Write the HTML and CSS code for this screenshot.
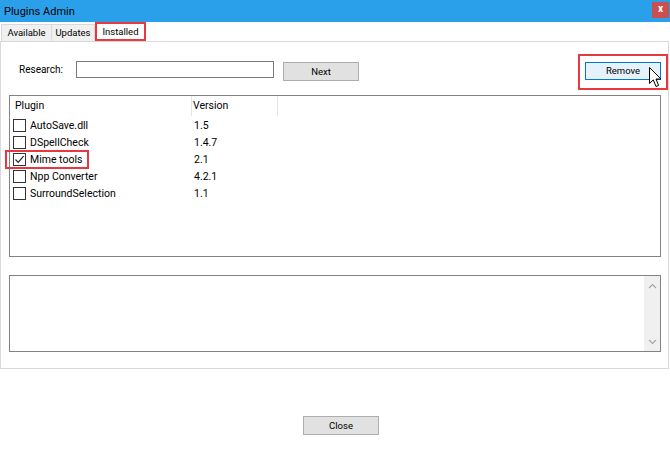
FILE: index.html
```html
<!DOCTYPE html>
<html>
<head>
<meta charset="utf-8">
<link rel="stylesheet" href="styles.css">
</head>
<body>
<div class="window">
  <div class="titlebar">
    <span class="title">Plugins Admin</span>
    <div class="close-x">x</div>
  </div>
  <div class="tabs">
    <div class="tab tab-available">Available</div>
    <div class="tab tab-updates">Updates</div>
    <div class="tab tab-active">Installed</div>
  </div>
  <div class="panel">
    <div class="search-row">
      <label class="search-label">Research:</label>
      <div class="search-input"></div>
      <div class="btn btn-next">Next</div>
      <div class="btn btn-remove">Remove</div>
      <div class="hl hl-remove"></div>
      <svg class="cursor" width="13" height="21" viewBox="0 0 13 21">
        <path d="M0.5 0.5 L0.5 16.5 L4.3 12.9 L7 19.5 L9.6 18.4 L7 12 L12 12 Z" fill="#fff" stroke="#000" stroke-width="1" stroke-linejoin="miter"/>
      </svg>
    </div>
    <div class="list">
      <div class="list-head">
        <div class="col col-name">Plugin</div>
        <div class="col col-ver">Version</div>
      </div>
      <div class="row"><span class="cb"></span><span class="name">AutoSave.dll</span><span class="ver">1.5</span></div>
      <div class="row"><span class="cb"></span><span class="name">DSpellCheck</span><span class="ver">1.4.7</span></div>
      <div class="row row-mark"><span class="cb"><svg width="11" height="11" viewBox="0 0 11 11"><path d="M1.5 5.5 L4.2 8.3 L9.6 2.2" fill="none" stroke="#222" stroke-width="1.2"/></svg></span><span class="name">Mime tools</span><span class="ver">2.1</span><div class="hl hl-mime"></div></div>
      <div class="row"><span class="cb"></span><span class="name">Npp Converter</span><span class="ver">4.2.1</span></div>
      <div class="row"><span class="cb"></span><span class="name">SurroundSelection</span><span class="ver">1.1</span></div>
    </div>
    <div class="desc">
      <div class="desc-text"></div>
      <div class="scrollbar">
        <svg width="9" height="6" viewBox="0 0 9 6"><path d="M1 5 L4.5 1.5 L8 5" fill="none" stroke="#a6a6a6" stroke-width="1.2"/></svg>
        <svg width="9" height="6" viewBox="0 0 9 6"><path d="M1 1 L4.5 4.5 L8 1" fill="none" stroke="#a6a6a6" stroke-width="1.2"/></svg>
      </div>
    </div>
  </div>
  <div class="footer">
    <div class="btn btn-close">Close</div>
  </div>
</div>
</body>
</html>
```

FILE: styles.css
```css
* { box-sizing: border-box; }
html, body {
  margin: 0;
  padding: 0;
  background: #fff;
}
body {
  font-family: Roboto, "Noto Sans", sans-serif;
  font-size: 10.5px;
  color: #000;
}
.window {
  width: 670px;
  height: 459px;
  background: #fff;
}
.titlebar {
  height: 22px;
  background: #2aa0ea;
  display: flex;
  align-items: center;
  justify-content: space-between;
  padding-left: 4px;
  padding-right: 1px;
}
.title {
  font-size: 11px;
  color: #000;
}
.close-x {
  width: 17px;
  height: 16px;
  margin-top: -3px;
  background: #c9504f;
  color: #fff;
  font-size: 10px;
  font-weight: bold;
  line-height: 14px;
  text-align: center;
}
.tabs {
  height: 19px;
  display: flex;
  align-items: flex-end;
  padding-left: 1px;
  font-size: 9.5px;
}
.tab {
  height: 17px;
  background: #f0f0f0;
  border: 1px solid #d9d9d9;
  border-bottom: none;
  line-height: 16px;
  text-align: center;
}
.tab-available { width: 50px; border-right: none; }
.tab-updates { width: 44px; }
.tab-active {
  width: 51px;
  height: 19px;
  background: #fff;
  border: 2px solid #e8373f;
  line-height: 15px;
}
.panel {
  width: 669px;
  height: 328px;
  border: 1px solid #d9d9d9;
  padding: 19px 7px 0 8px;
  position: relative;
}
.search-row {
  display: flex;
  align-items: flex-start;
  height: 19px;
  position: relative;
  font-size: 9.5px;
}
.search-label {
  width: 57px;
  margin-left: 10px;
  line-height: 17px;
  height: 17px;
  font-size: 10px;
}
.search-input {
  width: 198px;
  height: 17px;
  border: 1px solid #7a7a7a;
  background: #fff;
}
.btn {
  width: 76px;
  height: 19px;
  border: 1px solid #adadad;
  background: #e1e1e1;
  text-align: center;
  line-height: 17px;
  font-size: 9.5px;
}
.btn-next {
  margin-left: 9px;
  margin-top: 1px;
}
.btn-remove {
  margin-left: auto;
  margin-top: 1px;
  height: 18px;
  line-height: 16px;
  background: #e5f1fb;
  border-color: #0078d7;
}
.hl {
  position: absolute;
  border: 2px solid #e8373f;
}
.hl-remove {
  right: -7px;
  top: -7px;
  width: 90px;
  height: 36px;
}
.cursor {
  position: absolute;
  right: -1px;
  top: 6px;
}
.list {
  margin-top: 15px;
  height: 162px;
  border: 1px solid #828282;
  background: #fff;
}
.list-head {
  display: flex;
  height: 20px;
}
.col {
  line-height: 20px;
  border-right: 1px solid #e5e5e5;
}
.col-name {
  width: 182px;
  padding-left: 5px;
}
.col-ver {
  width: 86px;
  padding-left: 1px;
}
.row {
  display: flex;
  align-items: center;
  height: 17px;
  position: relative;
  padding-top: 1px;
}
.cb {
  width: 13px;
  height: 13px;
  border: 1px solid #333;
  margin-left: 3px;
  background: #fff;
  display: flex;
  align-items: center;
  justify-content: center;
}
.name {
  width: 164px;
  margin-left: 4px;
}
.ver {
  margin-left: 0;
}
.hl-mime {
  left: -5px;
  top: 0px;
  width: 84px;
  height: 19px;
}
.desc {
  margin-top: 18px;
  height: 77px;
  border: 1px solid #828282;
  display: flex;
}
.desc-text { flex: 1; }
.scrollbar {
  width: 16px;
  background: #f0f0f0;
  display: flex;
  flex-direction: column;
  justify-content: space-between;
  align-items: center;
  padding: 7px 0 6px;
}
.footer {
  padding-top: 47px;
  padding-left: 303px;
}
.btn-close {
  height: 19px;
}
```
